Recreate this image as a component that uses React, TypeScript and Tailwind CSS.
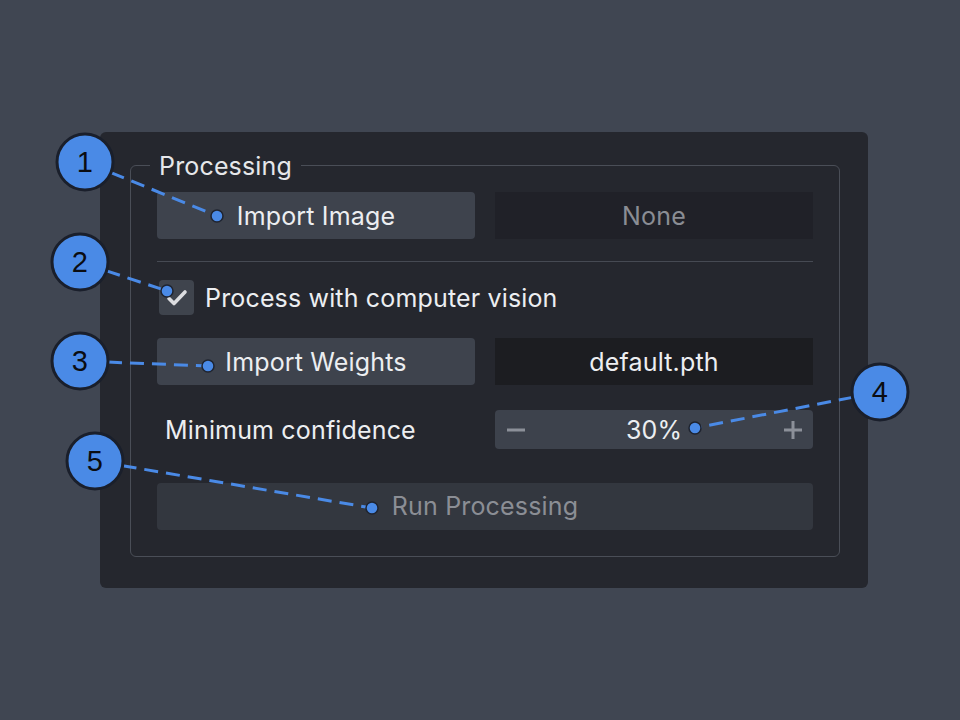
import React from 'react';

const FONT = "font-['Inter','Noto_Sans',sans-serif] tracking-[0.01em]";

// callouts: circle center, dot position
const CALLOUTS = [
  { n: 1, cx: 85, cy: 162, dx: 217, dy: 216 },
  { n: 2, cx: 80, cy: 262, dx: 167, dy: 291 },
  { n: 3, cx: 80, cy: 361, dx: 208, dy: 366 },
  { n: 4, cx: 880, cy: 392, dx: 695, dy: 428 },
  { n: 5, cx: 95, cy: 461, dx: 372, dy: 508 },
];

function Callouts() {
  const r = 28;
  return (
    <svg className="pointer-events-none absolute inset-0" width={960} height={720}>
      {CALLOUTS.map(c => {
        const ang = Math.atan2(c.dy - c.cy, c.dx - c.cx);
        const sx = c.cx + Math.cos(ang) * r;
        const sy = c.cy + Math.sin(ang) * r;
        return (
          <g key={c.n}>
            <line x1={sx} y1={sy} x2={c.dx} y2={c.dy} stroke="#4a8ae6" strokeWidth={3} strokeDasharray="14 8" />
            <circle cx={c.dx} cy={c.dy} r={6} fill="#4a8ae6" stroke="#1f2430" strokeWidth={1.5} />
            <circle cx={c.cx} cy={c.cy} r={r} fill="#4a8ae6" stroke="#1a1f2b" strokeWidth={3} />
            <text
              x={c.cx}
              y={c.cy + 10}
              textAnchor="middle"
              fontSize={29}
              fontFamily="'Liberation Sans', Arial, sans-serif"
              fill="#0b0d12"
            >
              {c.n}
            </text>
          </g>
        );
      })}
    </svg>
  );
}

export default function App() {
  return (
    <div className={`relative w-[960px] h-[720px] bg-[#404652] pt-[132px] pl-[100px] ${FONT}`}>
      <div className="w-[768px] h-[456px] bg-[#25272e] rounded-md pt-[19px] pl-[30px]">
        <fieldset className="w-[710px] h-[406px] border border-[#4a4e57] rounded-md px-[26px] pt-[13px]">
          <legend className="-ml-[7px] px-[9px] text-[25px] leading-[28px] text-[#e6e7ea]">
            <span className="relative top-[1px]">Processing</span>
          </legend>

          <div className="grid grid-cols-2 gap-[20px]">
            <button className="h-[47px] pt-[2px] rounded-[4px] bg-[#3e434d] text-[25px] text-[#eceef1]">Import Image</button>
            <div className="h-[47px] pt-[2px] bg-[#202128] flex items-center justify-center text-[25px] text-[#8a8d94]">None</div>
          </div>

          <div className="mt-[22px] h-px bg-[#464a53]" />

          <label className="mt-[18px] flex items-center gap-[11px] h-[35px] pl-[2px]">
            <span className="w-[35px] h-[35px] rounded-[4px] bg-[#3f444d] flex items-center justify-center">
              <svg width="24" height="24" viewBox="0 0 24 24" fill="none" stroke="#dcdde0" strokeWidth="3.6" strokeLinecap="round" strokeLinejoin="round">
                <path d="M4 12.5l5 5L20 6" />
              </svg>
            </span>
            <span className="pt-[2px] text-[25px] text-[#eceef1]">Process with computer vision</span>
          </label>

          <div className="mt-[23px] grid grid-cols-2 gap-[20px]">
            <button className="h-[47px] pt-[2px] rounded-[4px] bg-[#3e434d] text-[25px] text-[#eceef1]">Import Weights</button>
            <div className="h-[47px] pt-[2px] bg-[#1c1d21] flex items-center justify-center text-[25px] text-[#eceef1]">default.pth</div>
          </div>

          <div className="mt-[25px] grid grid-cols-2 gap-[20px] items-center">
            <span className="pl-[8px] pt-[2px] text-[25px] text-[#eceef1]">Minimum confidence</span>
            <div className="relative h-[39px] rounded-[4px] bg-[#3d424c] flex items-center justify-center">
              <svg className="absolute left-[11px] top-[10px]" width="20" height="20" viewBox="0 0 20 20" stroke="#8c9099" strokeWidth="3">
                <path d="M1 10h18" />
              </svg>
              <span className="pt-[2px] text-[25px] text-[#eceef1]">30%</span>
              <svg className="absolute right-[10px] top-[10px]" width="20" height="20" viewBox="0 0 20 20" stroke="#8c9099" strokeWidth="3">
                <path d="M1 10h18M10 1v18" />
              </svg>
            </div>
          </div>

          <button className="mt-[33px] w-full h-[47px] pt-[2px] rounded-[4px] bg-[#33373f] text-[25px] text-[#8b8e95]">Run Processing</button>
        </fieldset>
      </div>
      <Callouts />
    </div>
  );
}
